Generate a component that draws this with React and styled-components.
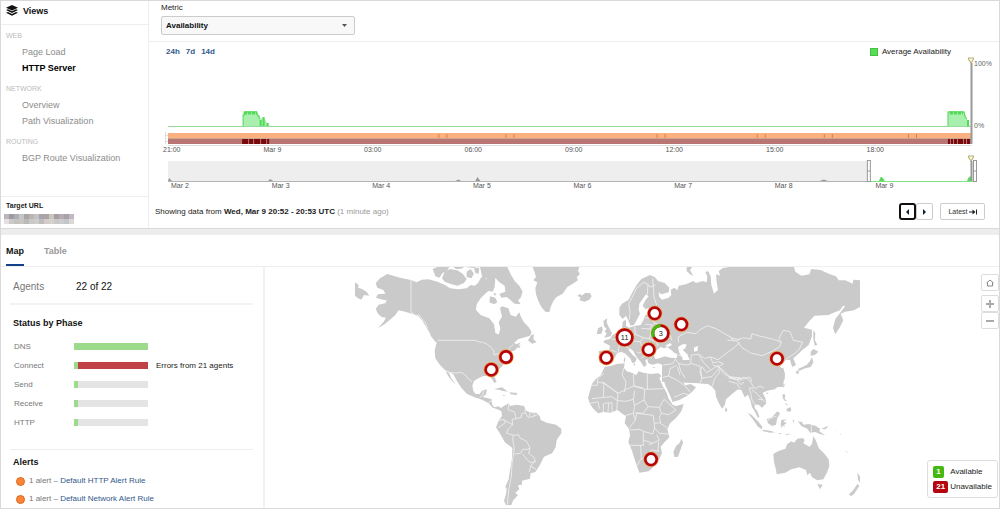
import React from 'react'
import styled, { createGlobalStyle } from 'styled-components'

const GlobalStyle = createGlobalStyle`
    * {
        box-sizing: border-box;
    }
    body {
        margin: 0;
        background: #fff;
        color: #222;
        font-family: 'Liberation Sans', Arial, sans-serif;
        font-size: 8px;
        line-height: 12px;
    }
    a {
        text-decoration: none;
    }
    h2, h3, p, ul {
        margin: 0;
        padding: 0;
    }
    svg {
        display: block;
    }
`

const Page = styled.div`
    border: 1px solid #d9d9d9;
`

const TopPanel = styled.section`
    display: flex;
    border-bottom: 1px solid #d9d9d9;
`

const Sidebar = styled.aside`
    display: flex;
    flex-direction: column;
    flex: none;
    width: 148px;
    border-right: 1px solid #eee;
`

const SidebarHeader = styled.h2`
    display: flex;
    align-items: center;
    gap: 5px;
    height: 24px;
    padding: 0 5px 4px;
    border-bottom: 1px solid #eee;
    color: #111;
    font-size: 9px;
`

const Nav = styled.nav`
    display: flex;
    flex-direction: column;
    gap: 5px;
    flex: 1;
    padding: 3px 5px 24px;
`

const NavTitle = styled.h3`
    color: #bbb;
    font-size: 7px;
    font-weight: 400;
    line-height: 16px;
`

const NavLink = styled.a`
    display: block;
    padding-left: 16px;
    color: ${({ $active }) => ($active ? '#000' : '#8c8c8c')};
    font-size: 9px;
    font-weight: ${({ $active }) => ($active ? 700 : 400)};
    line-height: 16px;
`

const Target = styled.div`
    padding: 3px 3px 4px;
    border-top: 1px solid #eee;
`

const TargetTitle = styled.h3`
    padding-left: 2px;
    font-size: 7px;
    line-height: 12px;
`

const Main = styled.main`
    flex: 1;
    min-width: 0;
`

const MetricBar = styled.div`
    display: flex;
    flex-direction: column;
    gap: 2px;
    padding: 1px 12px 6px;
    border-bottom: 1px solid #eee;
`

const SelectWrap = styled.div`
    display: flex;
    align-items: center;
    width: 194px;
    height: 19px;
    padding-right: 7px;
    border: 1px solid #ccc;
    border-radius: 2px;
    background: #f8f8f8;
`

const Select = styled.select`
    flex: 1;
    height: 17px;
    padding: 0 4px;
    border: 0;
    outline: 0;
    appearance: none;
    background: transparent;
    color: #111;
    font: 700 8px 'Liberation Sans', Arial, sans-serif;
`

const ChartHead = styled.div`
    display: flex;
    justify-content: space-between;
    padding: 4px 48px 0 17px;
    line-height: 11px;
`

const Ranges = styled.div`
    display: flex;
    gap: 6px;
`

const RangeLink = styled.a`
    color: #33598c;
    font-weight: 700;
`

const Legend = styled.div`
    display: flex;
    align-items: center;
    gap: 4px;
`

const Swatch = styled.span`
    width: 8px;
    height: 8px;
    border: 1px solid #40c540;
    background: #5bdb5b;
`

const ChartRow = styled.div`
    display: flex;
    padding-left: 15px;
    padding-right: ${({ $right }) => $right};
    margin-top: ${({ $top }) => $top};

    > svg {
        flex: 1;
        min-width: 0;
    }
`

const YAxis = styled.div`
    display: flex;
    flex-direction: column;
    justify-content: space-between;
    width: 25px;
    height: 74px;
    padding-top: 2px;
    color: #666;
    font-size: 7px;
    line-height: 10px;
`

const XAxis = styled.div`
    display: grid;
    grid-template-columns: repeat(8, 1fr);
    padding: 0 ${({ $right }) => $right} 0 ${({ $left }) => $left};
    color: #555;
    font-size: 7px;
    line-height: 8px;
`

const StatusBar = styled.div`
    display: flex;
    align-items: center;
    justify-content: space-between;
    padding: 13px 14px 8px 6px;
`

const Muted = styled.span`
    color: #999;
`

const Actions = styled.div`
    display: flex;
    gap: 7px;
`

const Pager = styled.div`
    display: flex;
`

const Button = styled.button`
    display: flex;
    align-items: center;
    justify-content: center;
    gap: 1px;
    width: ${({ $width }) => $width};
    height: 17px;
    padding: 0;
    border: ${({ $focus }) => ($focus ? '2px solid #111' : '1px solid #ccc')};
    border-radius: ${({ $focus }) => ($focus ? '3px' : '2px')};
    background: #fff;
    color: #333;
    font: 7px 'Liberation Sans', Arial, sans-serif;
`

const Divider = styled.div`
    height: 6px;
    background: #ededed;
`

const Tabs = styled.div`
    display: flex;
    gap: 20px;
    padding-left: 5px;
    border-bottom: 1px solid #eee;
`

const Tab = styled.button`
    height: 31px;
    padding: 2px 0 0;
    border: 0;
    border-bottom: 2px solid ${({ $active }) => ($active ? '#14418b' : 'transparent')};
    background: none;
    color: ${({ $active }) => ($active ? '#111' : '#999')};
    font: 700 9px 'Liberation Sans', Arial, sans-serif;
`

const BottomPanel = styled.section`
    display: flex;
`

const Details = styled.div`
    flex: none;
    width: 264px;
    padding: 0 10px 0 9px;
    border-right: 2px solid #f1f1f1;
`

const AgentRow = styled.div`
    display: flex;
    align-items: center;
    height: 38px;
    padding: 4px 3px 0;
    border-bottom: 2px solid #f3f3f3;
    color: #111;
    font-size: 10px;
`

const AgentLabel = styled.span`
    width: 63px;
    color: #777;
`

const SectionTitle = styled.h3`
    padding: ${({ $tight }) => ($tight ? '6px 3px 4px' : '12px 3px 8px')};
    color: #111;
    font-size: 9px;
    line-height: 12px;
`

const PhaseList = styled.ul`
    padding: 0 4px 17px;
    border-bottom: 1px solid #eee;
    list-style: none;
`

const PhaseRow = styled.li`
    display: flex;
    align-items: center;
    height: 19px;
`

const PhaseName = styled.span`
    width: 60px;
    color: #777;
`

const Bar = styled.span`
    display: flex;
    width: 74px;
    height: 7px;
    margin-right: 8px;
    background: ${({ $color }) => $color};
`

const BarFill = styled.span`
    background: #9cda8c;
`

const AlertRow = styled.p`
    display: flex;
    align-items: center;
    gap: 4px;
    height: 18px;
    padding-left: 6px;
    color: #777;
`

const Dot = styled.span`
    width: 9px;
    height: 9px;
    border: 1px solid #d9691f;
    border-radius: 50%;
    background: #fb8437;
`

const AlertLink = styled.a`
    color: #33598c;
`

const MapPane = styled.div`
    position: relative;
    display: flex;
    justify-content: center;
    flex: 1;
    padding-right: 50px;
`

const MapControls = styled.div`
    position: absolute;
    top: 7px;
    right: 0;
    display: flex;
    flex-direction: column;
`

const MapButton = styled.button`
    display: flex;
    align-items: center;
    justify-content: center;
    width: 18px;
    height: 17px;
    margin-bottom: ${({ $gap }) => ($gap ? '4px' : 0)};
    padding: 0;
    border: 1px solid #ddd;
    border-radius: 2px;
    background: #fff;
`

const MapLegend = styled.div`
    position: absolute;
    right: 1px;
    bottom: 10px;
    display: flex;
    flex-direction: column;
    gap: 2px;
    padding: 4px 5px;
    border: 1px solid #ddd;
    border-radius: 3px;
    background: #fff;
`

const LegendItem = styled.div`
    display: grid;
    grid-template-columns: 17px 1fr;
    align-items: center;
    height: 13px;
    color: #222;
`

const Badge = styled.span`
    justify-self: start;
    padding: 0 3px;
    border-radius: 2px;
    background: ${({ $color }) => $color};
    color: #fff;
    font-weight: 700;
`

const navGroups = [
    { title: 'WEB', items: ['Page Load', 'HTTP Server'] },
    { title: 'NETWORK', items: ['Overview', 'Path Visualization'] },
    { title: 'ROUTING', items: ['BGP Route Visualization'] },
]

const hours = ['21:00', 'Mar 9', '03:00', '06:00', '09:00', '12:00', '15:00', '18:00']
const days = ['Mar 2', 'Mar 3', 'Mar 4', 'Mar 5', 'Mar 6', 'Mar 7', 'Mar 8', 'Mar 9']

const phases = [
    { name: 'DNS', ok: 100, color: '#e4e4e4' },
    { name: 'Connect', ok: 5, color: '#c04247', note: 'Errors from 21 agents' },
    { name: 'Send', ok: 5, color: '#e4e4e4' },
    { name: 'Receive', ok: 5, color: '#e4e4e4' },
    { name: 'HTTP', ok: 5, color: '#e4e4e4' },
]

const orangeTicks = [274, 282, 341, 349, 492, 500, 592, 600, 659, 667, 743, 751]
const redTicks = [[78, 6], [85, 4], [90, 6], [97, 5], [103, 2], [783, 2], [786, 2], [789, 3], [793, 5], [799, 2], [802, 3]]

// Colours of the masked address, two rows of blocks
const mask = [
    ['#bdb4bd', '#9e9aa3', '#b1adb5', '#c3c6c6', '#aaa5a5', '#bbb5ae', '#c2c2c8', '#a8a3a8', '#ada2a4', '#c7c7bf', '#a39fa0', '#b7abb3', '#a9a3a9', '#c2b8c5'],
    ['#e4e0e0', '#cccacc', '#c3c3be', '#c9c5c0', '#bab9bb', '#c9c9c5', '#cfcbce', '#bdbdbb', '#d2cccc', '#d5d2ce', '#c8c8c5', '#cdcbd0', '#c2c6c8', '#dcd8d8'],
]

// Land outlines and country borders, one entry for each part of the world
const regions = [
    {
        name: 'North America',
        x: 0,
        y: 0,
        land: [
            'M77 55L90 40 112 27 132 33 150 38 183 45 200 52 215 44 235 43 262 50 285 60 300 70 325 73 350 70 362 60 374 62 384 54 392 40 402 30 410 45 422 60 418 76 408 84 392 100 380 118 378 135 392 150 418 160 432 178 436 203 446 209 451 190 446 172 456 155 450 130 456 124 475 130 482 150 497 155 508 142 514 158 522 172 536 186 545 202 540 212 520 218 505 222 492 234 500 238 512 232 504 246 495 256 480 262 474 272 462 285 458 302 448 312 432 325 434 338 440 350 433 354 426 342 418 333 400 333 385 340 372 348 367 362 370 378 376 386 388 388 396 377 411 373 408 388 398 396 424 402 427 420 434 427 446 424 456 432 454 438 440 432 428 428 415 414 396 404 372 396 350 386 334 368 322 350 310 328 298 322 284 314 270 300 256 280 254 258 258 240 262 228 245 214 232 192 218 168 204 152 186 146 160 139 146 136 136 150 120 164 104 178 84 189 100 172 108 158 95 156 84 146 77 132 86 119 106 115 110 106 98 104 78 98 83 88 106 86 100 75 82 68Z',
            'M236 192L252 206 264 226 268 238 256 230 242 212Z',
            'M286 318L296 322 304 340 318 360 310 352 298 338Z',
            'M15 52L26 60 24 68 36 72 50 80 58 92 42 90 34 104 24 100 15 92Z',
            'M248 12L262 6 298 6 292 16 278 24 268 38 256 34Z',
            'M284 20L300 12 322 16 338 26 350 42 342 54 322 62 304 58 284 50 276 40Z',
            'M350 20L362 12 372 26 364 40 350 36ZM372 10L388 8 386 26 376 24ZM310 6L342 6 334 11 318 12ZM346 6L384 6 370 9Z',
            'M390 6L472 6 482 28 494 48 508 62 518 80 512 98 504 106 512 118 494 116 480 104 470 96 454 98 448 86 466 80 464 62 446 50 436 38 434 66 428 80 416 78 408 62 410 40 396 34Z',
            'M420 94L436 98 442 112 432 118 418 112ZM430 82L440 88 434 92Z',
            'M534 226L544 210 552 208 550 222 560 232 546 236ZM502 246L512 240 508 250Z',
            'M432 372L456 367 474 380 460 378 446 374ZM478 382L502 384 500 390 482 388ZM458 390L468 391 460 393Z',
        ],
        borders: [
            'M183 45V142L192 148 200 154 206 148 216 162 226 172 232 190',
            'M262 226H376L384 230 398 232 412 238 424 248 432 258 432 270 446 266 462 258 474 256 480 248 490 238',
            'M284 318L300 322 318 324 334 322 346 330 356 342 366 350',
            'M388 400L396 392 402 378M408 388L416 394M416 412L428 406M430 424L436 422',
        ],
    },
    {
        name: 'Greenland',
        x: 390,
        y: 0,
        land: [
            'M158 6H298L294 18 300 28 290 36 294 46 276 58 262 66 248 86 230 96 220 108 212 126 208 142 196 140 184 126 174 106 168 88 166 70 172 52 160 46 168 36 164 22Z',
            'M292 92L302 86 304 92 316 84 330 84 335 94 328 104 314 110 298 106 302 98Z',
        ],
        borders: [],
    },
    {
        name: 'South America',
        x: 300,
        y: 345,
        land: [
            'M148 88L158 80 176 70 180 78 200 74 222 78 228 92 244 98 260 98 270 110 272 120 290 128 318 134 334 146 334 160 320 180 317 202 306 220 282 230 270 254 256 276 242 280 240 296 216 302 216 314 204 316 208 328 196 338 204 346 190 360 184 375 168 376 162 362 168 342 170 326 166 320 176 298 180 270 186 236 187 204 164 186 152 164 138 142 146 122 156 108 154 94Z',
        ],
        borders: [
            'M176 72L174 90 194 96 198 116 186 118 188 134 174 148 170 160 190 166 188 180 192 200 192 214 186 250 184 290 176 330 172 374',
            'M198 116L214 112 214 102 226 98 224 88M226 98L234 112 248 110 262 104M240 98L238 110M252 100V110',
            'M146 122L160 118 166 128 150 140 144 144M160 118L180 130 188 134',
            'M190 166L206 164 210 174 230 184 240 204 232 208 218 208 212 220 194 222',
            'M240 204L236 220 252 232 256 244 242 248 232 240 218 222M256 244L242 258 238 276M242 258L258 268',
        ],
    },
    {
        name: 'Europe',
        x: 720,
        y: 0,
        land: [
            'M88 128L96 116 116 104 126 84 140 60 154 42 180 30 194 36 204 48 224 54 238 68 236 82 214 88 206 82 208 96 216 104 236 98 244 90 242 74 254 68 262 76 266 62 288 58 310 48 318 54 338 48 350 52 352 34 346 22 354 18 362 34 364 60 372 86 384 74 380 52 378 28 390 32 386 18 400 8 460 6V360L216 350 216 318 220 300 204 295 186 299 174 293 172 282 166 286 170 300 162 306 152 290 140 276 128 256 118 250 116 256 128 270 140 280 136 292 126 294 122 282 106 266 94 260 82 264 74 278 62 294 46 300 28 292 26 258 58 254 60 242 40 232 44 226 60 222 68 210 82 202 94 196 97 184 98 170 108 164 108 182 116 188 136 182 152 180 160 166 166 150 178 146 176 138 208 132 196 126 166 132 158 122 166 106 176 94 168 88 158 102 148 116 146 134 150 146 140 166 132 180 122 182 114 164 108 152 98 162 88 150Z',
            'M40 168L52 160 50 172 56 186 66 204 62 214 42 218 50 206 44 198 50 192 42 184Z',
            'M24 190L36 184 38 196 34 206 20 208Z',
            'M290 6H306L300 16 310 32 300 28 290 18ZM128 296L136 296 134 302ZM102 278L106 278 105 292 101 290ZM186 306L198 307 190 309Z',
        ],
        water: [
            'M192 272L200 256 212 246 222 250 232 246 244 256 262 270 260 280 242 278 224 274 208 280 196 282Z',
            'M226 242L240 234 246 240 234 246Z',
            'M264 246L278 238 290 238 286 250 278 254 292 268 298 282 302 296 290 300 280 292 276 276 268 264Z',
            'M312 248L324 242 322 258 312 260Z',
        ],
        borders: [
            'M118 164L120 140 116 116 128 94 140 70 160 52 174 58 180 66 196 60M174 58L172 88M188 40L190 66 192 96 200 120',
            'M164 158L180 160 196 174 186 180 166 178M186 180L180 192 154 190M196 174L212 182 220 200 240 210 246 226',
            'M134 184L136 208 160 218 178 222 184 200 180 192M160 218L150 230 130 228 112 236M104 186L108 200M136 208L120 216 128 228M178 222L200 230 204 244M150 230L160 250 194 254M160 250L150 264 142 262M184 280L176 268 162 274 154 280M84 212L78 224 88 240 84 262M62 254L80 262M78 224L66 222M88 240L106 244 116 250',
            'M266 232L264 216 290 202 318 206 330 194 352 182 380 192 400 204 428 220 450 224',
            'M302 296L304 270 326 268 344 280 362 276 384 284 402 270 430 250 450 232M326 268L340 292 360 312M362 276L368 294 386 290 400 296 384 306 368 300',
            'M256 282L266 296 290 300 304 296 330 304 336 340M244 262L262 268 280 276M256 282L248 296 220 300M266 296L272 318 286 340',
        ],
    },
    {
        name: 'North Asia',
        x: 1140,
        y: 0,
        land: [
            'M-8 6H192L196 20 214 32 238 28 244 12 272 15 296 26 318 34 326 46 346 46 368 56 370 44 390 46V126L372 136 346 140 332 146 340 166 330 186 316 208 309 190 316 162 330 144 346 122 338 124 330 136 314 142 296 150 254 152 240 166 222 188 246 194 246 214 236 240 216 256 204 268 190 280 198 300 186 306 180 284 166 286 150 304 162 324 160 366H-8Z',
            'M250 196L256 204 255 226 262 240 254 242 250 220Z',
            'M242 260L250 252 266 260 254 270 242 272ZM246 276L250 292 242 306 226 310 206 318 204 312 230 300 240 288ZM200 316L208 320 204 328 198 324Z',
        ],
        borders: [
            'M-8 226L20 226 40 218 62 222 66 206 84 212 110 218 134 224 154 232 150 244 128 258 96 272 62 264 36 248 20 228',
            'M154 232L146 222 160 196 180 200 190 226 218 232 208 252 196 264 166 284M-4 340L20 338 40 342 60 336 66 350M-4 212L14 230',
        ],
    },
    {
        name: 'Africa and South Asia',
        x: 720,
        y: 285,
        land: [
            'M44 20L62 18 80 12 104 10 102 24 110 34 130 40 138 46 146 34 160 38 182 42 206 40 214 48 208 54 218 78 230 98 236 116 248 134 258 138 281 132 274 154 258 174 240 190 232 208 238 232 222 248 212 260 216 280 208 296 196 316 176 334 148 338 142 322 132 292 126 272 115 246 120 226 117 206 104 190 108 168 98 162 82 150 62 158 40 156 24 160 10 146 0 132 -6 114 0 92 6 72 18 56 32 46Z',
            'M275 236L279 248 264 290 254 292 250 276 258 258 268 250Z',
            'M216 10L218 52 226 76 238 102 248 126 268 120 294 106 308 94 318 82 302 72 286 76 274 60 270 46 284 52 300 64 328 70 354 72 366 80 376 92 378 110 386 128 396 146 404 136 408 118 426 102 444 88 462 82V0H216Z',
            'M406 142L412 148 410 156 405 152Z',
        ],
        borders: [
            'M2 76H22V66L42 70 40 112 6 116M36 64L84 100M42 40L22 56V66M42 70L84 100 130 78 160 84M102 24L96 44 108 66 104 96M130 40L132 78M172 42V88M132 78L164 88 220 86M164 88L162 120 174 140',
            'M84 100L82 122 108 124 130 118 134 92M82 122L80 152M40 112L66 110 82 122M66 128V156M56 130L54 156M40 132V156M24 124L28 146M0 130L22 126M66 128L40 130',
            'M130 118L134 140 130 160 108 166M162 120L134 136M134 158L160 160 174 140 208 142 222 118M208 142L214 160 236 164 258 150 240 134 222 118M214 160L208 172 212 190 232 204M130 160L136 180 118 204M136 180L140 160 190 166 194 204 188 222 160 214 150 208 120 210M194 190L212 188M194 204L208 220 236 222M160 214L160 240 188 250 208 240 200 224M118 256H160V240M152 256L154 298 168 290 184 270 206 274M176 254L188 250M152 298L142 316M206 244L204 276',
            'M218 52L236 48 260 60 286 78M236 48L240 26 260 16M286 78L300 96M252 112L280 100 296 104M270 46L262 20M336 54L330 36 336 20 350 38 366 28 384 16M330 70L336 54 366 50 384 28M366 80L374 56 388 38 386 18M384 16L400 40 430 58 456 60M386 20L420 50 450 54',
        ],
    },
    {
        name: 'Oceania and South East Asia',
        x: 1140,
        y: 315,
        land: [
            'M-4 76L20 58 34 60 44 82 54 74 62 94 66 112 74 124 84 144 88 140 82 124 74 114 74 104 86 104 96 113 109 100 106 84 98 68 112 62 134 58 152 44 164 28 165 12 160 -6H-4Z',
            'M53 128L64 134 84 154 97 170 96 178 84 170 70 150ZM98 179L120 182 136 187 120 188 98 183ZM110 148L126 142 142 124 150 130 142 144 138 164 126 168 114 160ZM154 150L172 148 160 154 170 160 162 164 166 172 158 166 156 176 152 164ZM142 190L156 190 152 193ZM164 194L182 190 172 196ZM204 154L216 156 220 164 236 162 258 168 270 176 268 184 286 196 270 192 256 186 240 188 232 176 214 168ZM274 176L288 170 296 168 286 178Z',
            'M158 72L166 74 164 86 172 94 164 92 158 84ZM166 98L174 104 168 106ZM174 114L182 112 184 122 176 126 168 120ZM188 148L192 152 190 162ZM108 70L116 66 112 73ZM160 42L165 44 160 54ZM316 184L324 188 318 186ZM344 240L356 250 348 245ZM330 190L334 194 330 193Z',
            'M130 252L144 244 166 236 172 222 184 214 192 218 202 206 218 204 224 210 220 220 238 230 246 222 250 198 258 212 266 234 282 250 296 268 298 288 290 310 280 328 262 331 246 322 240 308 232 316 228 300 208 292 184 298 166 308 140 313 138 300 132 276Z',
            'M262 342L278 344 270 358ZM382 308L392 322 390 338 384 330ZM382 342L388 348 372 372 364 378 356 374 370 360Z',
        ],
        borders: [
            'M-4 20L20 28 44 22 58 30 66 44 76 56M20 28L32 44 42 36M-4 34L20 40 30 56M58 54L62 70 66 90 74 104M76 56L90 48 102 54M66 60L80 70 104 96M84 88H100M112 152L128 142 140 138M244 166V188M72 54L58 54',
        ],
    },
]

const markers = [
    { x: 468, y: 276 },
    { x: 424, y: 314 },
    { x: 769, y: 278 },
    { x: 914, y: 145 },
    { x: 994, y: 178 },
    { x: 896, y: 254 },
    { x: 1281, y: 281 },
    { x: 903, y: 583 },
    { x: 824, y: 217, count: 11 },
    { x: 932, y: 205, count: 3, partial: true },
]

const Marker = ({ x, y, count, partial }) => {
    const r = count ? 23 : 17
    return (
        <g transform={`translate(${x} ${y})`}>
            <circle r={r + 6} fill="#f39a3d" />
            <circle r={r} fill="#fff" stroke="#b5060f" strokeWidth="8" />
            {partial && <path d={`M${-r + 2} 11A${r} ${r} 0 0 1 0 ${-r}`} fill="none" stroke="#45b90f" strokeWidth="9" />}
            {count && <text y="8" fontSize="22" textAnchor="middle" fill="#222">{count}</text>}
        </g>
    )
}

const WorldMap = () => (
    <svg width="505" height="241" viewBox="15 6 1515 723" role="img" aria-label="Agent locations">
        {regions.map((region) => (
            <g key={region.name} transform={`translate(${region.x} ${region.y})`}>
                <path d={region.land.join('')} fill="#cacaca" />
                {region.water && <path d={region.water.join('')} fill="#fff" />}
            </g>
        ))}
        {regions.map((region) => (
            <path
                key={region.name}
                transform={`translate(${region.x} ${region.y})`}
                d={region.borders.join('')}
                fill="none"
                stroke="#f2f2f2"
                strokeWidth="2.4"
                strokeLinejoin="round"
            />
        ))}
        {markers.map((marker) => <Marker key={`${marker.x}-${marker.y}`} {...marker} />)}
    </svg>
)

const LayersIcon = () => (
    <svg width="12" height="11" viewBox="0 0 24 22" fill="#111">
        <path d="M12 0L24 5.5 12 11 0 5.5Z" />
        <path d="M0 10L4 8.500 12 12.500 20 8.500 24 10 12 16Z" />
        <path d="M0 15.500L4 13.800 12 18 20 13.800 24 15.500 12 21.500Z" />
    </svg>
)

const Arrow = ({ left }) => (
    <svg width="3" height="6" viewBox="0 0 3 6">
        <path d={left ? 'M3 0V6L0 3Z' : 'M0 0V6L3 3Z'} fill="#123" />
    </svg>
)

const MainChart = () => (
    <svg height="89" viewBox="0 0 809 89" preserveAspectRatio="none" role="img" aria-label="Average availability">
        <path d="M79 69V58L81 54H93L95 59 97 62 99 60 101 63 105 69ZM783 69V54H799L801 59 803 66 805 69Z" fill="#a9efad" />
        <path d="M79 69V58H80V55H92L94 59H95V62M783 69V55H799L800 60 802 62" fill="none" stroke="#53d957" />
        <path d="M80 56H93M785 56H798" stroke="#53d957" strokeWidth="3" strokeDasharray="3 1" />
        <path d="M96.500 69V63M99.500 69V60M103.500 69V66M803 69V63" stroke="#53d957" strokeWidth="2" />
        <path d="M4 69.500H806" stroke="#97dc99" />
        <rect x="4" y="76" width="803" height="6" fill="#fbb17f" />
        <rect x="4" y="81" width="803" height="1" fill="#c9a68c" />
        <rect x="4" y="82" width="803" height="5" fill="#b97474" />
        {orangeTicks.map((x) => <rect key={x} x={x} y="77" width="1" height="4" fill="#ee7b35" />)}
        {redTicks.map(([x, width]) => <rect key={x} x={x} y="82" width={width} height="5" fill="#780a0d" />)}
        <path d="M1.500 75V87M1 78.500H4M1 84.500H4M4 88.500H806" stroke="#ddd" />
        <path d="M806.500 6V87" stroke="#999" strokeWidth="2" />
        <path d="M803.500 1H808.500V2L806 6 803.500 2Z" fill="#fffbd0" stroke="#b5ae7c" />
    </svg>
)

const Timeline = () => (
    <svg height="27" viewBox="0 0 812 27" preserveAspectRatio="none" role="img" aria-label="Timeline">
        <rect x="4" y="6" width="700" height="20" fill="#eee" />
        <path d="M4 26L5 23 8 26ZM104 26L106 24 109 26ZM291 26L294 24.500 297 26ZM311 26L313 22 316 26ZM655 26L659 24.500 663 26Z" fill="#999" />
        <path d="M4 26.500H704" stroke="#b5b5b5" />
        <path d="M704 26.500H808" stroke="#7fe384" />
        <path d="M714 26L716 22 717 22 720 26ZM802 26L804 22 807 21V26Z" fill="#53d957" />
        <path d="M806.500 6V26" stroke="#999" strokeWidth="2" />
        <path d="M803.500 1H808.500V2L806 6 803.500 2Z" fill="#fffbd0" stroke="#b5ae7c" />
        <path d="M702.500 5.500H705.500V26.500H702.500ZM702.500 16H705.500M808.500 5.500H811.500V26.500H808.500ZM808.500 16H811.500" fill="#fff" stroke="#999" />
    </svg>
)

const App = () => (
    <>
        <GlobalStyle />
        <Page>
            <TopPanel>
                <Sidebar>
                    <SidebarHeader><LayersIcon />Views</SidebarHeader>
                    <Nav>
                        {navGroups.map((group) => (
                            <div key={group.title}>
                                <NavTitle>{group.title}</NavTitle>
                                {group.items.map((item) => (
                                    <NavLink key={item} href="#" $active={item === 'HTTP Server'}>{item}</NavLink>
                                ))}
                            </div>
                        ))}
                    </Nav>
                    <Target>
                        <TargetTitle>Target URL</TargetTitle>
                        <svg width="70" height="12" viewBox="0 0 70 12">
                            {mask.map((row, j) => row.map((color, i) => (
                                <rect key={`${i}-${j}`} x={i * 5} y={j * 5 + 2} width="5" height="5" fill={color} />
                            )))}
                        </svg>
                    </Target>
                </Sidebar>
                <Main>
                    <MetricBar>
                        <label htmlFor="metric">Metric</label>
                        <SelectWrap>
                            <Select id="metric" defaultValue="Availability">
                                <option>Availability</option>
                            </Select>
                            <svg width="5" height="3" viewBox="0 0 5 3"><path d="M0 0H5L2.500 3Z" fill="#555" /></svg>
                        </SelectWrap>
                    </MetricBar>
                    <ChartHead>
                        <Ranges>
                            <RangeLink href="#">24h</RangeLink>
                            <RangeLink href="#">7d</RangeLink>
                            <RangeLink href="#">14d</RangeLink>
                        </Ranges>
                        <Legend><Swatch />Average Availability</Legend>
                    </ChartHead>
                    <ChartRow $top="0" $right="0">
                        <MainChart />
                        <YAxis><span>100%</span><span>0%</span></YAxis>
                    </ChartRow>
                    <XAxis $left="14px" $right="32px">
                        {hours.map((hour) => <span key={hour}>{hour}</span>)}
                    </XAxis>
                    <ChartRow $top="1px" $right="22px">
                        <Timeline />
                    </ChartRow>
                    <XAxis $left="22px" $right="23px">
                        {days.map((day) => <span key={day}>{day}</span>)}
                    </XAxis>
                    <StatusBar>
                        <span>Showing data from <b>Wed, Mar 9 20:52 - 20:53 UTC</b> <Muted>(1 minute ago)</Muted></span>
                        <Actions>
                            <Pager>
                                <Button $width="17px" $focus aria-label="Previous"><Arrow left /></Button>
                                <Button $width="17px" aria-label="Next"><Arrow /></Button>
                            </Pager>
                            <Button $width="45px">
                                Latest
                                <svg width="8" height="6" viewBox="0 0 8 6">
                                    <path d="M0 3H5M7.500 0.500V5.500" stroke="#222" />
                                    <path d="M3.500 0.500L6.500 3 3.500 5.500Z" fill="#222" />
                                </svg>
                            </Button>
                        </Actions>
                    </StatusBar>
                </Main>
            </TopPanel>
            <Divider />
            <Tabs>
                <Tab $active>Map</Tab>
                <Tab>Table</Tab>
            </Tabs>
            <BottomPanel>
                <Details>
                    <AgentRow><AgentLabel>Agents</AgentLabel>22 of 22</AgentRow>
                    <SectionTitle>Status by Phase</SectionTitle>
                    <PhaseList>
                        {phases.map((phase) => (
                            <PhaseRow key={phase.name}>
                                <PhaseName>{phase.name}</PhaseName>
                                <Bar $color={phase.color}><BarFill style={{ width: `${phase.ok}%` }} /></Bar>
                                {phase.note}
                            </PhaseRow>
                        ))}
                    </PhaseList>
                    <SectionTitle $tight>Alerts</SectionTitle>
                    <AlertRow><Dot /><span>1 alert – <AlertLink href="#">Default HTTP Alert Rule</AlertLink></span></AlertRow>
                    <AlertRow><Dot /><span>1 alert – <AlertLink href="#">Default Network Alert Rule</AlertLink></span></AlertRow>
                </Details>
                <MapPane>
                    <WorldMap />
                    <MapControls>
                        <MapButton $gap aria-label="Reset map">
                            <svg width="8" height="8" viewBox="0 0 8 8" fill="none" stroke="#888"><path d="M0.500 4L4 1 7.500 4M1.500 3.500V7H6.500V3.500" /></svg>
                        </MapButton>
                        <MapButton aria-label="Zoom in">
                            <svg width="8" height="8" viewBox="0 0 8 8" stroke="#aaa" strokeWidth="2"><path d="M0 4H8M4 0V8" /></svg>
                        </MapButton>
                        <MapButton aria-label="Zoom out">
                            <svg width="8" height="8" viewBox="0 0 8 8" stroke="#aaa" strokeWidth="2"><path d="M0 4H8" /></svg>
                        </MapButton>
                    </MapControls>
                    <MapLegend>
                        <LegendItem><Badge $color="#45b90f">1</Badge>Available</LegendItem>
                        <LegendItem><Badge $color="#b5060f">21</Badge>Unavailable</LegendItem>
                    </MapLegend>
                </MapPane>
            </BottomPanel>
        </Page>
    </>
)

export default App
